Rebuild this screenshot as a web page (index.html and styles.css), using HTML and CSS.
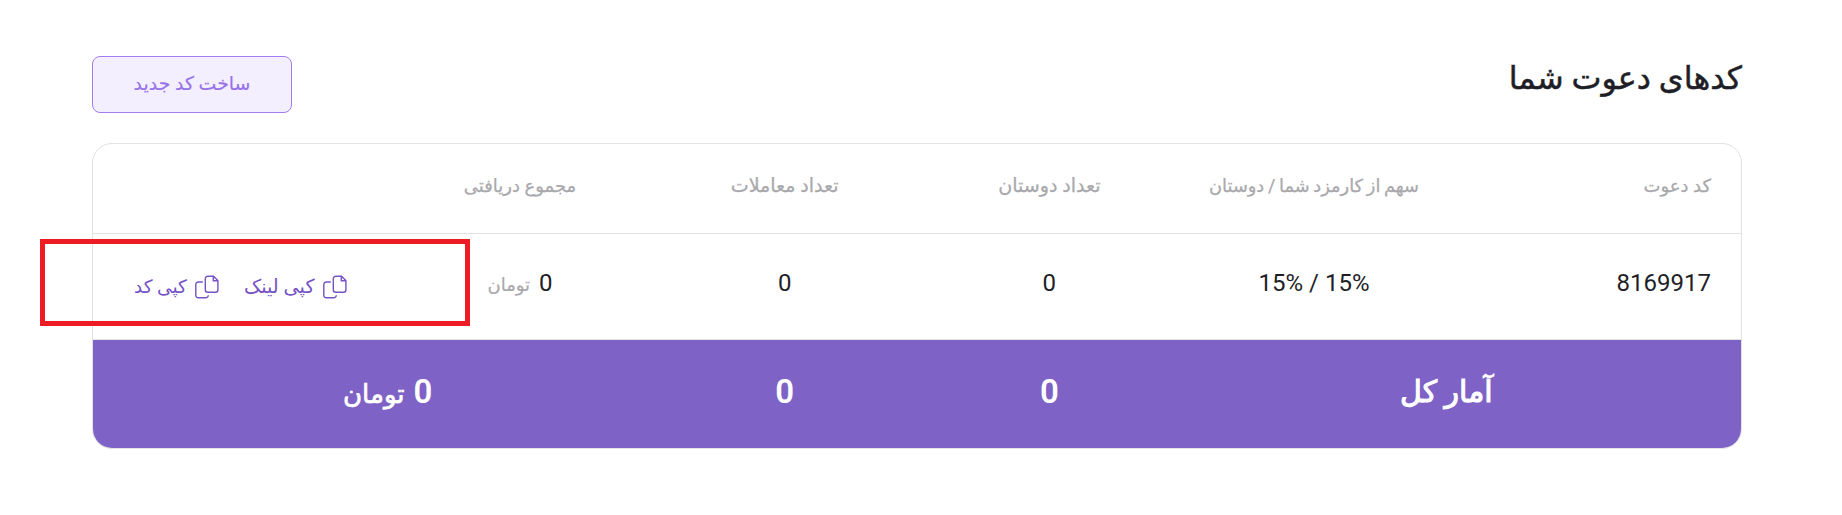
FILE: index.html
```
<!DOCTYPE html>
<html lang="fa" dir="rtl">
<head>
<meta charset="utf-8">
<title>کدهای دعوت شما</title>
<link rel="stylesheet" href="styles.css">
</head>
<body>
<main class="page">
  <header class="page-header">
    <h1 class="title">کدهای دعوت شما</h1>
    <button class="create-button"><span>ساخت کد جدید</span></button>
  </header>
  <section class="table">
    <div class="row row-head">
      <div class="cell cell-start"><span>کد دعوت</span></div>
      <div class="cell"><span class="label-share">سهم از کارمزد شما / دوستان</span></div>
      <div class="cell"><span class="label-count">تعداد دوستان</span></div>
      <div class="cell"><span class="label-count">تعداد معاملات</span></div>
      <div class="cell"><span>مجموع دریافتی</span></div>
      <div class="cell"></div>
    </div>
    <div class="row row-data">
      <div class="cell cell-start"><span>8169917</span></div>
      <div class="cell"><span dir="ltr">15% / 15%</span></div>
      <div class="cell"><span>0</span></div>
      <div class="cell"><span>0</span></div>
      <div class="cell"><div class="amount"><span>0</span><span class="unit">تومان</span></div></div>
      <div class="cell actions">
        <a class="copy"><svg class="copy-icon" viewBox="0 0 24 24"><path d="M12.800 1.200h5.700L22.900 5.500V14.800a2.500 2.500 0 0 1-2.500 2.500h-7.600a2.500 2.500 0 0 1-2.500-2.500V3.700a2.500 2.500 0 0 1 2.500-2.500zM18.300 1.400V5.700h4.400"/><path d="M7.800 7H3.300A2.500 2.500 0 0 0 .8 9.500v10.700a2.500 2.500 0 0 0 2.500 2.500h7.500a2.500 2.500 0 0 0 2.500-2.500"/></svg><span class="copy-link">کپی لینک</span></a>
        <a class="copy"><svg class="copy-icon" viewBox="0 0 24 24"><path d="M12.800 1.200h5.700L22.900 5.500V14.800a2.500 2.500 0 0 1-2.500 2.500h-7.600a2.500 2.500 0 0 1-2.500-2.500V3.700a2.500 2.500 0 0 1 2.500-2.500zM18.300 1.400V5.700h4.400"/><path d="M7.800 7H3.300A2.500 2.500 0 0 0 .8 9.500v10.700a2.500 2.500 0 0 0 2.500 2.500h7.500a2.500 2.500 0 0 0 2.500-2.500"/></svg><span>کپی کد</span></a>
      </div>
    </div>
    <div class="row row-total">
      <div class="cell cell-wide"><span class="total-label">آمار کل</span></div>
      <div class="cell"><span>0</span></div>
      <div class="cell"><span>0</span></div>
      <div class="cell cell-wide"><div class="amount"><span>0</span><span class="unit">تومان</span></div></div>
    </div>
  </section>
  <div class="highlight"></div>
</main>
</body>
</html>
```
FILE: styles.css
```
* { box-sizing: border-box; }
body {
  margin: 0;
  background: #fff;
  color: #1e1e27;
  font-family: Roboto, "DejaVu Sans", sans-serif;
}
.page {
  position: relative;
  width: 1842px;
  height: 515px;
  padding: 56px 100px 0 92px;
}
.page-header {
  display: flex;
  justify-content: space-between;
  height: 87px;
}
.title {
  margin: 0;
  font-size: 31.800px;
  font-weight: 400;
  line-height: 44px;
  -webkit-text-stroke: 0.500px currentColor;
}
.create-button {
  width: 200px;
  height: 57px;
  padding: 0 0 3px;
  border: 1px solid #a27df0;
  border-radius: 8px;
  background: #f4effe;
  color: #9873ea;
  font: inherit;
  font-size: 18.900px;
  -webkit-text-stroke: 0.200px currentColor;
}
.table {
  height: 306px;
  border: 1px solid #e2e2e4;
  border-radius: 20px;
  overflow: hidden;
}
.row {
  display: grid;
  grid-template-columns: repeat(6, 1fr);
  padding: 0 30px;
  border-bottom: 1px solid #e2e2e4;
}
.cell {
  display: flex;
  align-items: center;
  justify-content: center;
}
.cell-start { justify-content: flex-start; }
.cell-wide { grid-column: span 2; }
.row-head {
  height: 90px;
  padding-bottom: 6px;
  color: #a8a8ac;
  font-size: 18px;
  -webkit-text-stroke: 0.250px currentColor;
}
.label-share { font-size: 17.800px; word-spacing: -0.700px; }
.label-count { font-size: 19.100px; }
.row-data { height: 106px; font-size: 24px; }
.row-data .cell { padding-bottom: 7px; }
.amount { display: flex; align-items: baseline; gap: 9px; }
.row-data .unit {
  color: #a8a8ac;
  font-size: 18px;
  -webkit-text-stroke: 0.200px currentColor;
}
.row-data .actions {
  justify-content: flex-end;
  gap: 25px;
  padding: 0 0 0 11px;
}
.copy {
  display: flex;
  align-items: center;
  gap: 8px;
  color: #7552c5;
  font-size: 18.500px;
}
.copy-link { font-size: 19.300px; }
.copy-icon {
  width: 24px;
  height: 24px;
  fill: none;
  stroke: currentColor;
  stroke-width: 1.400;
}
.row-total {
  height: 108px;
  padding-bottom: 6px;
  border-bottom: 0;
  background: #7f62c5;
  color: #fff;
  font-size: 33px;
  font-weight: 600;
}
.row-total .unit {
  font-size: 26px;
  font-weight: 400;
  -webkit-text-stroke: 0.700px currentColor;
}
.total-label {
  font-size: 30px;
  font-weight: 400;
  -webkit-text-stroke: 1.100px currentColor;
}
.highlight {
  position: absolute;
  left: 40px;
  top: 239px;
  width: 430px;
  height: 87px;
  border: 5px solid #ed1c24;
}
```
